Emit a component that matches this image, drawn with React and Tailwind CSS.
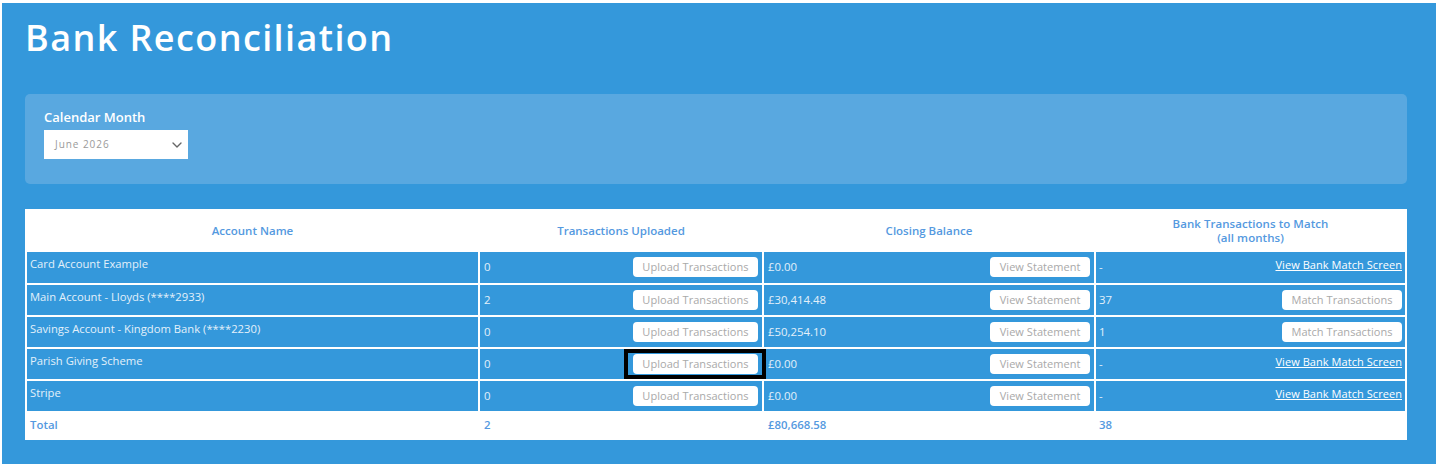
import { ChevronDown } from "lucide-react";

const accounts = [
  { name: "Card Account Example", uploaded: "0", balance: "£0.00", match: "-", h: "h-[31px]", pad: "pb-[1px]" },
  { name: "Main Account - Lloyds (****2933)", uploaded: "2", balance: "£30,414.48", match: "37", h: "h-[30px]", pad: "" },
  { name: "Savings Account - Kingdom Bank (****2230)", uploaded: "0", balance: "£50,254.10", match: "1", h: "h-[30px]", pad: "" },
  { name: "Parish Giving Scheme", uploaded: "0", balance: "£0.00", match: "-", h: "h-[30px]", pad: "", highlight: true },
  { name: "Stripe", uploaded: "0", balance: "£0.00", match: "-", h: "h-[30px]", pad: "" },
];

const columns = "grid grid-cols-[451px_282px_330px_309px] gap-x-[2px]";

const Btn = ({ children }) => (
  <button className="h-[20px] rounded-[4px] bg-white px-[9.5px] text-[11px] leading-[20px] tracking-[0.05px] text-[#a9a9a9]">
    {children}
  </button>
);

const Row = ({ name, uploaded, balance, match, h, pad, highlight }) => (
  <div className={`${columns} ${h} text-[11.4px] text-[#e3f0fa]`}>
    <div className="bg-[#3498db] pl-[3px] pt-[4px] text-[11.25px] leading-[16px]">{name}</div>
    <div className={`relative flex items-center justify-between bg-[#3498db] pl-[4px] pr-[4px] ${pad}`}>
      <span>{uploaded}</span>
      <Btn>Upload Transactions</Btn>
      {highlight && (
        <div className="absolute right-[-4px] top-[0px] h-[30px] w-[142px] border-[4px] border-black" />
      )}
    </div>
    <div className={`flex items-center justify-between bg-[#3498db] pl-[4px] pr-[4px] ${pad}`}>
      <span>{balance}</span>
      <Btn>View Statement</Btn>
    </div>
    <div className={`flex items-center justify-between bg-[#3498db] pl-[3px] pr-[3px] ${pad}`}>
      <span>{match}</span>
      {match === "-" ? (
        <a className="-mt-[4px] text-[11px] tracking-[0.06px] text-white underline">View Bank Match Screen</a>
      ) : (
        <Btn>Match Transactions</Btn>
      )}
    </div>
  </div>
);

export default function App() {
  return (
    <div className="h-[464px] w-[1436px] bg-white pl-[2px] pt-[3px] font-['Open_Sans',sans-serif]">
      <div className="h-[461px] w-[1434px] bg-[#3498db] pl-[23px] pr-[29px]">
        <h1 className="pt-[10px] text-[36px] font-semibold leading-[50px] tracking-[1.4px] text-white">Bank Reconciliation</h1>

        <div className="mt-[31px] h-[90px] rounded-[5px] bg-[#59a8e0] pl-[19px] pt-[14px]">
          <label className="block text-[13px] font-semibold leading-[18px] text-white">Calendar Month</label>
          <div className="mt-[4px] flex h-[29px] w-[144px] items-center justify-between bg-white pl-[11px] pr-[3px] text-[10px] tracking-[0.95px] text-[#9a9a9a]">
            <span>June 2026</span>
            <ChevronDown size={16} className="text-[#666]" />
          </div>
        </div>

        <div className="mt-[25px] h-[231px] w-[1382px] bg-white px-[2px]">
          <div className={`${columns} h-[43px] text-[11.5px] font-semibold text-[#5499e0]`}>
            <div className="flex items-center justify-center pt-[1px]">Account Name</div>
            <div className="flex items-center justify-center pt-[1px]">Transactions Uploaded</div>
            <div className="flex items-center justify-center pt-[1px]">Closing Balance</div>
            <div className="flex items-center justify-center pt-[1px] text-center leading-[14px] tracking-[0.05px]">
              Bank Transactions to Match
              <br />
              (all months)
            </div>
          </div>
          <div className="flex flex-col gap-y-[2px]">
            {accounts.map((a) => (
              <Row key={a.name} {...a} />
            ))}
          </div>
          <div className={`${columns} h-[28px] items-center text-[11.4px] font-semibold text-[#5499e0]`}>
            <div className="pl-[3px]">Total</div>
            <div className="pl-[4px]">2</div>
            <div className="pl-[4px]">£80,668.58</div>
            <div className="pl-[3px]">38</div>
          </div>
        </div>
      </div>
    </div>
  );
}
